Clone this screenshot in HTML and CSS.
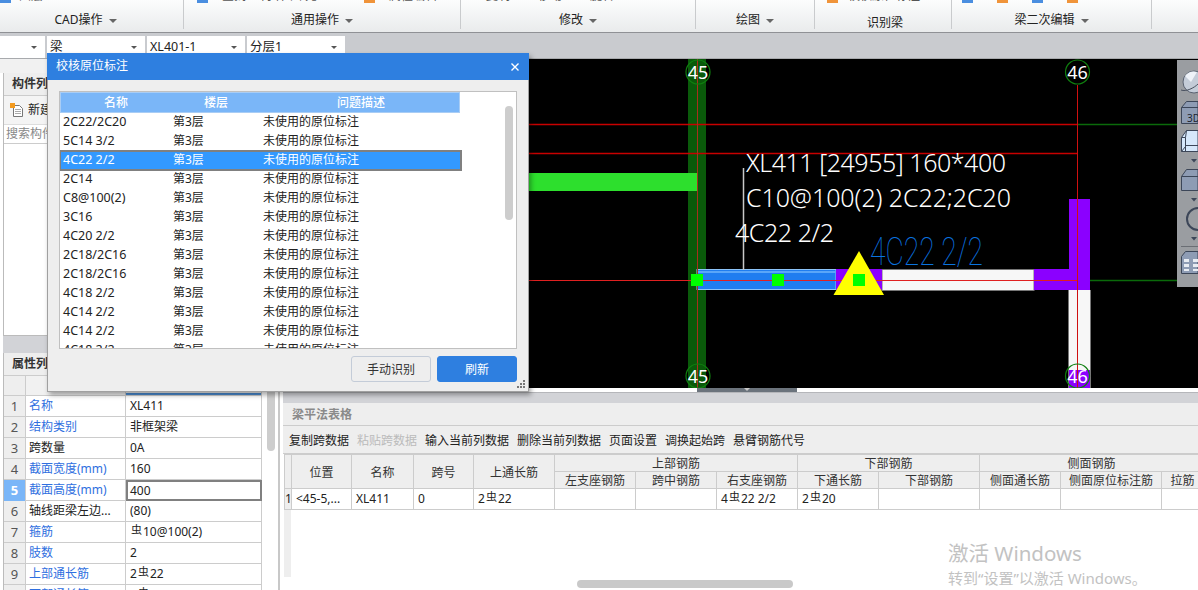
FILE: index.html
```html
<!DOCTYPE html>
<html lang="zh-CN">
<head>
<meta charset="utf-8">
<title>校核原位标注</title>
<link rel="stylesheet" href="styles.css">
</head>
<body>
<div class="app">
  <header class="ribbon">
    <section class="rib-group g1">
      <div class="rib-top pad-a"><i class="chip blue"></i><span class="frag">图层</span></div>
      <div class="rib-label shift">CAD操作<i class="caret"></i></div>
    </section>
    <section class="rib-group g2">
      <div class="rib-top pad-b"><i class="chip blue"></i><span class="frag">查找</span><span class="frag wide">构件图元</span><i class="chip orange"></i><span class="frag">属性编辑</span></div>
      <div class="rib-label">通用操作<i class="caret"></i></div>
    </section>
    <section class="rib-group g3">
      <div class="rib-top pad-c"><span class="frag">复制</span><span class="frag">移动</span><span class="frag">旋转</span></div>
      <div class="rib-label">修改<i class="caret"></i></div>
    </section>
    <section class="rib-group g4">
      <div class="rib-top"></div>
      <div class="rib-label">绘图<i class="caret"></i></div>
    </section>
    <section class="rib-group g5">
      <div class="rib-top pad-e"><i class="chip orange"></i><span class="frag">校核原位标注</span></div>
      <div class="rib-label low">识别梁</div>
    </section>
    <section class="rib-group g6">
      <div class="rib-top pad-f"><i class="chip blue"></i><i class="chip orange"></i><i class="chip blue"></i><i class="chip orange"></i></div>
      <div class="rib-label">梁二次编辑<i class="caret"></i></div>
    </section>
    <section class="rib-group g7"></section>
  </header>

  <div class="selbar">
    <div class="sel first"><i class="caret small"></i></div>
    <div class="sel">梁<i class="caret small"></i></div>
    <div class="sel">XL401-1<i class="caret small"></i></div>
    <div class="sel">分层1<i class="caret small"></i></div>
  </div>

  <div class="work">
    <aside class="left">
      <div class="left-top"></div>
      <div class="pane comp">
        <div class="pane-head">构件列表</div>
        <div class="comp-tools">
          <svg class="new-icon" width="14" height="15" viewBox="0 0 14 15"><path d="M3.500 2.500h6l3 3v8h-9z" fill="#fff" stroke="#777"/><path d="M5 6.500h6M5 8.500h6M5 10.500h6" stroke="#aaa"/><path d="M0 0h5v5H0z" fill="#f39a1e"/></svg>
          <span>新建</span>
        </div>
        <div class="comp-search">搜索构件</div>
        <div class="comp-tree"></div>
      </div>
      <div class="band"></div>
      <div class="pane props">
        <div class="pane-head">属性列表</div>
        <div class="props-body">
          <div class="ptable">
            <div class="prow phead"><div class="pn"></div><div class="pk"></div><div class="pv"></div></div>
            <div class="prow"><div class="pn">1</div><div class="pk link">名称</div><div class="pv">XL411</div></div>
            <div class="prow"><div class="pn">2</div><div class="pk link">结构类别</div><div class="pv">非框架梁</div></div>
            <div class="prow"><div class="pn">3</div><div class="pk">跨数量</div><div class="pv">0A</div></div>
            <div class="prow"><div class="pn">4</div><div class="pk link">截面宽度(mm)</div><div class="pv">160</div></div>
            <div class="prow"><div class="pn on">5</div><div class="pk link">截面高度(mm)</div><div class="pv focus">400</div></div>
            <div class="prow"><div class="pn">6</div><div class="pk">轴线距梁左边...</div><div class="pv">(80)</div></div>
            <div class="prow"><div class="pn">7</div><div class="pk link">箍筋</div><div class="pv"><span class="bar">虫</span>10@100(2)</div></div>
            <div class="prow"><div class="pn">8</div><div class="pk link">肢数</div><div class="pv">2</div></div>
            <div class="prow"><div class="pn">9</div><div class="pk link">上部通长筋</div><div class="pv">2<span class="bar">虫</span>22</div></div>
            <div class="prow"><div class="pn">10</div><div class="pk link">下部通长筋</div><div class="pv">2<span class="bar">虫</span>20</div></div>
          </div>
          <div class="vscroll"><div class="vthumb"></div></div>
        </div>
      </div>
    </aside>

    <main class="right">
      <div class="canvas">
        <svg class="cad" width="915" height="329" viewBox="283 59 915 329">
          <rect x="283" y="59" width="915" height="329" fill="#000"/>
          <rect x="688" y="59" width="18" height="329" fill="#0a5a0a"/>
          <rect x="283" y="173" width="414" height="18" fill="#2ddf2d"/>
          <path d="M283 124.500H1077M283 153.500H1077" stroke="#c80000" stroke-width="1.300"/>
          <path d="M1077 124.500H1178M1077 280.500H1178" stroke="#0a6a0a" stroke-width="1.300"/>

          <rect x="1069" y="290" width="21" height="98" fill="#f7f7f7"/>
          <path d="M1068.500 290V388M1090.500 290V388" stroke="#777"/>
          <rect x="1069" y="370" width="21" height="18" fill="#8b00ff"/>
          <rect x="882" y="269.500" width="152" height="21" fill="#f7f7f7" stroke="#777"/>
          <path d="M1034 269H1069V199H1090V290H1034z" fill="#8b00ff"/>
          <rect x="697" y="269.500" width="139" height="20" fill="#1f7df0" stroke="#8cc4f8"/>
          <rect x="698" y="271" width="138" height="2" fill="#5aa6f8"/>
          <rect x="836" y="269" width="46" height="21" fill="#8b00ff"/>

          <path d="M283 280.500H1077" stroke="#e02020"/>
          <path d="M697.500 59V388" stroke="#a8301c"/>
          <path d="M1077.500 85V388" stroke="#d01010"/>
          <path d="M859 251L884 295H833.500z" fill="#ffff00"/>
          <path d="M691 274h12v12h-12zM772 274h12v12h-12zM853 274h12v12h-12z" fill="#00ff00"/>
          <path d="M743.500 168V270" stroke="#c8c8c8" stroke-width="1.500"/>

          <text class="cad-w" x="746" y="172" textLength="260">XL411 [24955] 160*400</text>
          <text class="cad-w" x="746" y="207" textLength="265">C10@100(2) 2C22;2C20</text>
          <text class="cad-w" x="735" y="242" textLength="99">4C22 2/2</text>
          <text class="cad-b" x="870" y="265" textLength="113" lengthAdjust="spacingAndGlyphs">4C22 2/2</text>

          <circle class="axis" cx="698" cy="72" r="12"/>
          <circle class="axis" cx="698" cy="376" r="12"/>
          <circle class="axis" cx="1077.500" cy="72" r="12"/>
          <circle class="axis" cx="1077.500" cy="376" r="12"/>
          <text class="cad-a" x="698" y="79">45</text>
          <text class="cad-a" x="698" y="383">45</text>
          <text class="cad-a" x="1077.500" y="79">46</text>
          <text class="cad-a" x="1077.500" y="383">46</text>
        </svg>
        <div class="viewbar">
          <svg width="21" height="227" viewBox="0 0 21 227">
            <circle cx="17" cy="22" r="11" fill="#c4ccd8" stroke="#5a6270"/>
            <path d="M8 16a11 11 0 0 1 12-4l-6 10z" fill="#eef2f8"/>
            <path d="M4 30C9 32 17 28 21 24" fill="none" stroke="#4a5260"/>
            <path d="M4.500 47.500l5-6H21v22H4.500z" fill="#8e9cb4" stroke="#3c4658"/>
            <path d="M4.500 47.500H21" stroke="#3c4658"/>
            <text class="vb-3d" x="10" y="62">3D</text>
            <path d="M4.500 77.500l5-7H21v21H4.500z" fill="#d6e8fb" stroke="#3c4658"/>
            <path d="M4.500 77.500h4l1-7M8.500 77.500v14M8.500 86.500l-4 5M8.500 85.500H21" fill="none" stroke="#3c4658"/>
            <path d="M14 99h6l-3 3.500z" fill="#3c4658"/>
            <path d="M4.500 116.500l5-7H21v21H4.500z" fill="#8e9cb4" stroke="#3c4658"/>
            <path d="M4.500 116.500H21" stroke="#3c4658"/>
            <path d="M14 138h6l-3 3.500z" fill="#3c4658"/>
            <path d="M21 148a11 11 0 1 0 0 22" fill="none" stroke="#3c4658" stroke-width="2"/>
            <path d="M14 177h6l-3 3.500z" fill="#3c4658"/>
            <path d="M4 186.500H21" stroke="#6a6e74"/>
            <path d="M4.500 196.500l4-5H21v22H4.500z" fill="#8e9cb4" stroke="#3c4658"/>
            <path d="M7 199h5v3H7zM7 204h5v3H7zM7 209h5v2H7zM16 199h5v3h-5zM16 204h5v3h-5zM16 209h5v2h-5z" fill="#e8ecf2"/>
          </svg>
        </div>
      </div>
      <div class="split"><div class="split-handle"><i></i></div></div>
      <div class="band2"></div>
      <div class="tbl-head">梁平法表格</div>
      <div class="tbl-tools">
        <span>复制跨数据</span><span class="off">粘贴跨数据</span><span>输入当前列数据</span><span>删除当前列数据</span><span>页面设置</span><span>调换起始跨</span><span>悬臂钢筋代号</span>
      </div>
      <div class="grid-area">
        <table class="grid">
          <colgroup>
            <col class="c7"><col class="c60"><col class="c62"><col class="c60"><col class="c81"><col class="c81"><col class="c81"><col class="c81"><col class="c81"><col class="c101"><col class="c81"><col class="c101"><col class="c42">
          </colgroup>
          <thead>
            <tr>
              <th rowspan="2"></th><th rowspan="2">位置</th><th rowspan="2">名称</th><th rowspan="2">跨号</th><th rowspan="2">上通长筋</th>
              <th colspan="3">上部钢筋</th><th colspan="2">下部钢筋</th><th colspan="3">侧面钢筋</th>
            </tr>
            <tr>
              <th>左支座钢筋</th><th>跨中钢筋</th><th>右支座钢筋</th><th>下通长筋</th><th>下部钢筋</th><th>侧面通长筋</th><th>侧面原位标注筋</th><th>拉筋</th>
            </tr>
          </thead>
          <tbody>
            <tr>
              <td class="rh">1</td><td>&lt;45-5,...</td><td>XL411</td><td>0</td><td>2<span class="bar">虫</span>22</td><td></td><td></td><td>4<span class="bar">虫</span>22 2/2</td><td>2<span class="bar">虫</span>20</td><td></td><td></td><td></td><td></td>
            </tr>
          </tbody>
        </table>
        <div class="hscroll"></div>
      </div>
    </main>
  </div>

  <div class="dialog">
    <div class="dlg-title"><span>校核原位标注</span>
      <svg class="dlg-x" width="10" height="10" viewBox="0 0 10 10"><path d="M1.500 1.500l7 7M8.500 1.500l-7 7" stroke="#fff" stroke-width="1.400"/></svg>
    </div>
    <div class="dlg-body">
      <div class="list">
        <div class="lrow lhead"><span>名称</span><span>楼层</span><span>问题描述</span></div>
        <div class="lrow"><span>2C22/2C20</span><span>第3层</span><span>未使用的原位标注</span></div>
        <div class="lrow"><span>5C14 3/2</span><span>第3层</span><span>未使用的原位标注</span></div>
        <div class="lrow sel-row"><span>4C22 2/2</span><span>第3层</span><span>未使用的原位标注</span></div>
        <div class="lrow"><span>2C14</span><span>第3层</span><span>未使用的原位标注</span></div>
        <div class="lrow"><span>C8@100(2)</span><span>第3层</span><span>未使用的原位标注</span></div>
        <div class="lrow"><span>3C16</span><span>第3层</span><span>未使用的原位标注</span></div>
        <div class="lrow"><span>4C20 2/2</span><span>第3层</span><span>未使用的原位标注</span></div>
        <div class="lrow"><span>2C18/2C16</span><span>第3层</span><span>未使用的原位标注</span></div>
        <div class="lrow"><span>2C18/2C16</span><span>第3层</span><span>未使用的原位标注</span></div>
        <div class="lrow"><span>4C18 2/2</span><span>第3层</span><span>未使用的原位标注</span></div>
        <div class="lrow"><span>4C14 2/2</span><span>第3层</span><span>未使用的原位标注</span></div>
        <div class="lrow"><span>4C14 2/2</span><span>第3层</span><span>未使用的原位标注</span></div>
        <div class="lrow"><span>4C18 2/2</span><span>第3层</span><span>未使用的原位标注</span></div>
        <div class="list-thumb"></div>
      </div>
      <div class="dlg-btns">
        <button class="btn">手动识别</button>
        <button class="btn primary">刷新</button>
      </div>
    </div>
    <svg class="grip" width="9" height="9" viewBox="0 0 9 9"><path d="M6 0h2v2H6zM3 3h2v2H3zM6 3h2v2H6zM0 6h2v2H0zM3 6h2v2H3zM6 6h2v2H6z" fill="#777"/></svg>
  </div>

  <div class="watermark">
    <div class="wm1">激活 Windows</div>
    <div class="wm2">转到“设置”以激活 Windows。</div>
  </div>
</div>
</body>
</html>
```
FILE: styles.css
```css
* { box-sizing: border-box; }
html, body { margin: 0; padding: 0; }
body {
  width: 1198px; height: 590px; overflow: hidden;
  font: 12px/1.2 "Noto Sans", "Noto Sans CJK SC", sans-serif;
  color: #222;
}
.app { position: relative; width: 1198px; height: 590px; display: flex; flex-direction: column; overflow: hidden; }

/* ribbon */
.ribbon {
  height: 33px; flex: none; display: flex;
  background: linear-gradient(#fcfdfd, #e9ebec);
  border-bottom: 1px solid #8f9195;
}
.rib-group { height: 29px; border-right: 1px solid #c9cbcd; flex: none; display: flex; flex-direction: column; }
.g1 { width: 184px; } .g2 { width: 277px; } .g3 { width: 235px; } .g4 { width: 119px; }
.g5 { width: 137px; } .g6 { width: 200px; } .g7 { flex: 1; border-right: 0; }
.rib-top { height: 3px; overflow: hidden; display: flex; align-items: flex-start; gap: 10px; flex: none; }
.pad-a { padding-left: 0; gap: 8px; }
.pad-b { padding-left: 13px; gap: 14px; }
.pad-c { padding-left: 25px; gap: 28px; }
.pad-e { padding-left: 12px; }
.pad-f { padding-left: 10px; gap: 24px; }
.chip { width: 11px; height: 3px; flex: none; }
.chip.blue { background: #4a8ee0; }
.chip.orange { background: #f0943a; }
.frag { line-height: 12px; margin-top: -10px; flex: none; color: #555; }
.frag.wide { letter-spacing: 3px; margin-right: 30px; }
.rib-label { flex: 1; display: flex; align-items: center; justify-content: center; gap: 6px; font-size: 12px; color: #222; padding-top: 9px; }
.rib-label.shift { padding-right: 12px; }
.rib-label.low { padding-top: 13px; padding-left: 4px; }
.caret { width: 0; height: 0; border: 4px solid transparent; border-top: 4px solid #666; border-bottom: 0; flex: none; margin-left: 0; }
.caret.small { border-width: 3px 3.500px 0; border-top-color: #555; }

/* selector bar */
.selbar { height: 26px; flex: none; background: #c9cbcf; display: flex; gap: 2px; padding-top: 3px; border-bottom: 1px solid #a8aaad; }
.sel { width: 98px; height: 22px; background: #fff; padding: 3px 3px 0; display: flex; justify-content: space-between; align-items: flex-start; font-size: 12.500px; color: #222; }
.sel.first { width: 45px; justify-content: flex-end; }
.sel .caret { margin-top: 7px; margin-right: 5px; }

/* workspace */
.work { flex: 1; display: flex; min-height: 0; }
.left { width: 283px; flex: none; display: flex; flex-direction: column; padding: 0 3px; background: #fff; }
.left-top { height: 14px; flex: none; margin: 0 -3px; background: #f1f1f1; }
.pane { border-left: 1px solid #bbb; }
.comp { height: 263px; flex: none; display: flex; flex-direction: column; border-right: 1px solid #bbb; border-bottom: 1px solid #bbb; }
.pane-head { height: 23px; flex: none; background: #eee; font-weight: 700; font-size: 12px; padding: 4px 0 0 8px; color: #333; border-bottom: 1px solid #ccc; }
.comp-tools { height: 28px; flex: none; background: #f4f4f4; display: flex; align-items: center; gap: 4px; padding-left: 6px; }
.comp-search { height: 20px; flex: none; color: #888; padding: 2px 0 0 2px; border-bottom: 1px solid #ccc; border-top: 1px solid #ddd; }
.comp-tree { flex: 1; background: #fff; }
.band { height: 17px; flex: none; background: #d2d3d7; margin-right: 3px; }
.props { flex: 1; min-height: 0; display: flex; flex-direction: column; overflow: hidden; border-right: 2px solid #c8c8c8; }
.props-body { flex: 1; display: flex; min-height: 0; }
.ptable { width: 258px; flex: none; }
.prow { display: grid; grid-template-columns: 22px 100px 136px; height: 21px; border-bottom: 1px solid #ccc; line-height: 20px; }
.phead { height: 20px; background: #f1f1f1; }
.phead .pv { background: linear-gradient(#f1f1f1 17px, #4a8bd0 17px); }
.pn { background: #eee; text-align: center; border-right: 1px solid #ccc; color: #555; font-size: 13px; }
.pn.on { background: #7ab6f8; color: #fff; font-weight: 700; }
.pk { padding-left: 3px; border-right: 1px solid #ccc; white-space: nowrap; overflow: hidden; color: #222; }
.pk.link { color: #2f6fe0; }
.pv { padding-left: 4px; border-right: 1px solid #ccc; white-space: nowrap; }
.pv.focus { outline: 2px solid #808080; outline-offset: -2px; line-height: 21px; }
.bar { font-size: 11px; position: relative; top: -2px; margin: 0 1px; }
.vscroll { flex: 1; padding-left: 5px; }
.vthumb { width: 8px; height: 75px; background: #cdcdcd; border-radius: 0 0 4px 4px; }

/* right */
.right { flex: 1; min-width: 0; display: flex; flex-direction: column; }
.canvas { height: 329px; flex: none; position: relative; background: #000; }
.cad { display: block; }
.cad-w { font: 300 25px "Noto Sans", sans-serif; fill: #fff; }
.cad-b { font: 100 39px Roboto, sans-serif; fill: #0a74e0; }
.cad-a { font: 18px "Noto Sans", sans-serif; fill: #fff; text-anchor: middle; }
.axis { fill: none; stroke: #0f7f0f; stroke-width: 1.200; }
.vb-3d { font: 10px "Noto Sans", sans-serif; fill: #1c2430; }
.viewbar { position: absolute; right: 0; top: 1px; width: 21px; height: 227px; background: #9a9da1; }
.viewbar svg { display: block; }
.split { height: 4px; flex: none; background: #fff; padding-left: 414px; }
.split-handle { width: 100px; height: 4px; background: #6b737c; display: flex; justify-content: center; }
.split-handle i { width: 0; height: 0; border: 3px solid transparent; border-top: 3px solid #c8c8c8; border-bottom: 0; }
.band2 { height: 11px; flex: none; background: #d2d3d7; border-top: 1px solid #b5b6ba; }
.tbl-head { height: 23px; flex: none; background: #eee; color: #8a8a8a; font-weight: 700; padding: 5px 0 0 9px; border-bottom: 1px solid #ccc; }
.tbl-tools { height: 28px; flex: none; background: #eee; display: flex; gap: 8px; align-items: center; padding: 3px 0 0 6px; color: #222; border-bottom: 1px solid #ccc; }
.tbl-tools .off { color: #bbb; }
.grid-area { flex: 1; position: relative; overflow: hidden; padding-left: 1px; background: linear-gradient(#eee, #eee) no-repeat 1px 0 / 7px 123px, #fff; }
.grid { table-layout: fixed; border-collapse: collapse; width: 919px; }
.c7 { width: 7px; } .c42 { width: 42px; } .c60 { width: 60px; } .c62 { width: 62px; } .c81 { width: 81px; } .c101 { width: 101px; }
.grid th { background: #eee; font-weight: 400; height: 17px; padding: 1px 0 0; border: 1px solid #ccc; color: #333; line-height: 15px; white-space: nowrap; overflow: hidden; }
.grid td { background: #fff; height: 21px; padding: 1px 0 0 4px; border: 1px solid #ccc; white-space: nowrap; overflow: hidden; }
.grid td.rh { padding: 0; background: #eee; text-align: center; }
.hscroll { position: absolute; left: 294px; bottom: 2px; width: 216px; height: 8px; background: #c9c9c9; border-radius: 4px; }

/* dialog */
.dialog {
  position: absolute; left: 47px; top: 53px; width: 482px; height: 339px;
  background: #eee; border: 1px solid #a0a0a0; border-top: 0;
  box-shadow: 2px 3px 5px rgba(0,0,0,.35);
  display: flex; flex-direction: column;
}
.dlg-title { height: 27px; flex: none; background: #2e7fe0; color: #fff; display: flex; justify-content: space-between; align-items: center; padding: 0 9px; margin: 0 -1px; font-size: 12px; }
.dlg-body { flex: 1; display: flex; flex-direction: column; padding: 11px 11px 9px; }
.list { position: relative; width: 458px; height: 258px; flex: none; background: #fff; border: 1px solid #c0c0c0; overflow: hidden; }
.lrow { display: grid; grid-template-columns: 110px 90px 200px; width: 400px; height: 19px; line-height: 18px; color: #222; }
.lrow span { padding-left: 3px; white-space: nowrap; }
.lrow span:first-child { font-size: 12.500px; }
.lhead { height: 21px; background: #7ab6f8; color: #fff; line-height: 20px; border: 1px solid #a9cdf5; }
.lhead span, .lhead span:first-child { padding: 0; text-align: center; font-size: 12px; font-weight: 500; }
.sel-row { background: #3399ff; color: #fff; outline: 2px solid #808080; outline-offset: -1px; width: 401px; position: relative; }
.list-thumb { position: absolute; left: 445px; top: 14px; width: 8px; height: 114px; background: #cdcdcd; border-radius: 4px; }
.dlg-btns { flex: 1; display: flex; justify-content: flex-end; gap: 6px; padding-top: 7px; }
.btn { width: 80px; height: 26px; font: 12px "Noto Sans", "Noto Sans CJK SC", sans-serif; background: #eee; color: #333; border: 1px solid #c4ccd8; border-radius: 3px; padding: 0; }
.btn.primary { background: #2e7fe0; border-color: #2e7fe0; color: #fff; }
.grip { position: absolute; right: 2px; bottom: 2px; }

/* watermark */
.watermark { position: absolute; left: 948px; top: 541px; color: #c2c2c2; }
.wm1 { font-size: 20.500px; line-height: 25px; }
.wm2 { font-size: 15px; line-height: 20px; margin-top: 2px; }
```
